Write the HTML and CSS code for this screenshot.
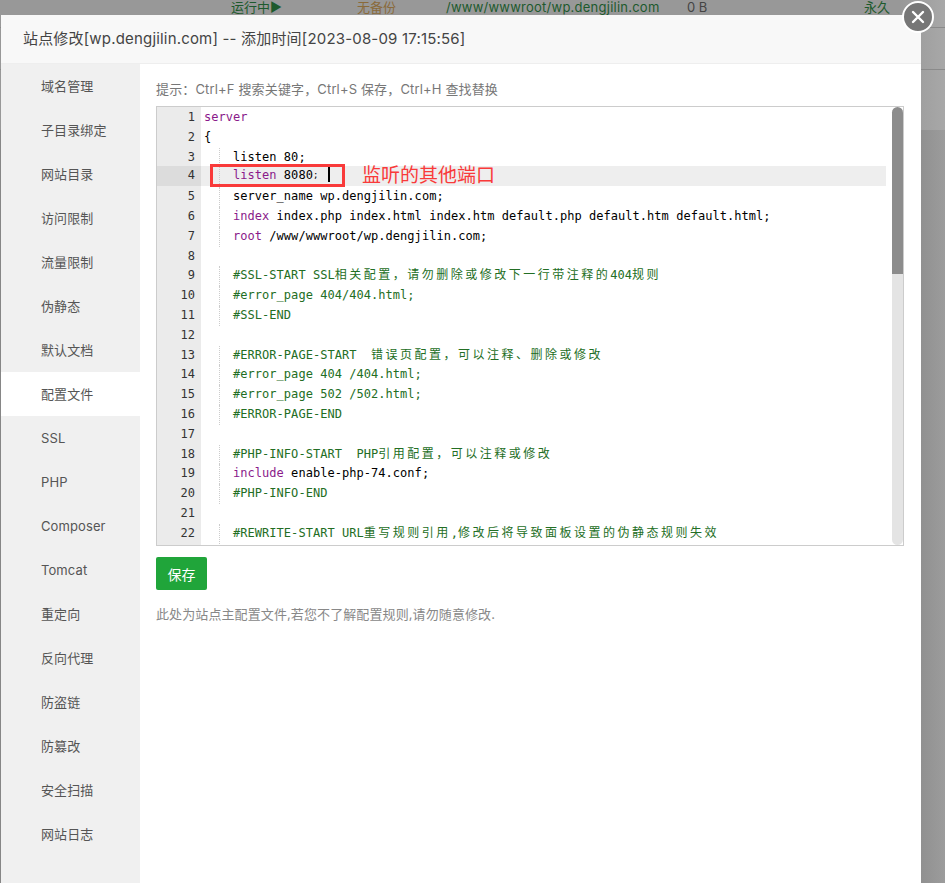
FILE: index.html
```html
<!DOCTYPE html>
<html lang="zh">
<head>
<meta charset="utf-8">
<title>站点修改</title>
<link rel="stylesheet" href="styles.css">
</head>
<body>
<div class="backdrop">
  <div class="bg-row">
    <span class="bg-status">运行中▶</span>
    <span class="bg-backup">无备份</span>
    <span class="bg-path">/www/wwwroot/wp.dengjilin.com</span>
    <span class="bg-size">0 B</span>
    <span class="bg-expire">永久</span>
  </div>
  <div class="modal">
    <header class="modal-head">站点修改[wp.dengjilin.com] -- 添加时间[2023-08-09 17:15:56]</header>
    <div class="modal-body">
      <nav class="side">
        <div class="side-item">域名管理</div>
        <div class="side-item">子目录绑定</div>
        <div class="side-item">网站目录</div>
        <div class="side-item">访问限制</div>
        <div class="side-item">流量限制</div>
        <div class="side-item">伪静态</div>
        <div class="side-item">默认文档</div>
        <div class="side-item active">配置文件</div>
        <div class="side-item">SSL</div>
        <div class="side-item">PHP</div>
        <div class="side-item">Composer</div>
        <div class="side-item">Tomcat</div>
        <div class="side-item">重定向</div>
        <div class="side-item">反向代理</div>
        <div class="side-item">防盗链</div>
        <div class="side-item">防篡改</div>
        <div class="side-item">安全扫描</div>
        <div class="side-item">网站日志</div>
      </nav>
      <main class="content">
        <p class="hint">提示：Ctrl+F 搜索关键字，Ctrl+S 保存，Ctrl+H 查找替换</p>
        <div class="editor">
          <div class="gutter">
            <div>1</div><div>2</div><div>3</div><div class="cur">4</div><div>5</div><div>6</div><div>7</div><div>8</div><div>9</div><div>10</div><div>11</div><div>12</div><div>13</div><div>14</div><div>15</div><div>16</div><div>17</div><div>18</div><div>19</div><div>20</div><div>21</div><div>22</div>
          </div>
          <div class="code">
            <div class="ln"><span class="kw">server</span></div>
            <div class="ln">{</div>
            <div class="ln in">listen 80;</div>
            <div class="ln in cur"><span class="kw">listen</span> 8080<span class="semi">;</span><span class="caret"></span></div>
            <div class="ln in">server_name wp.dengjilin.com;</div>
            <div class="ln in"><span class="kw">index</span> index.php index.html index.htm default.php default.htm default.html;</div>
            <div class="ln in"><span class="kw">root</span> /www/wwwroot/wp.dengjilin.com;</div>
            <div class="ln"></div>
            <div class="ln in cm">#SSL-START SSL<span class="cjk">相关配置，请勿删除或修改下一行带注释的</span>404<span class="cjk">规则</span></div>
            <div class="ln in cm">#error_page 404/404.html;</div>
            <div class="ln in cm">#SSL-END</div>
            <div class="ln"></div>
            <div class="ln in cm">#ERROR-PAGE-START  <span class="cjk">错误页配置，可以注释、删除或修改</span></div>
            <div class="ln in cm">#error_page 404 /404.html;</div>
            <div class="ln in cm">#error_page 502 /502.html;</div>
            <div class="ln in cm">#ERROR-PAGE-END</div>
            <div class="ln"></div>
            <div class="ln in cm">#PHP-INFO-START  PHP<span class="cjk">引用配置，可以注释或修改</span></div>
            <div class="ln in"><span class="kw">include</span> enable-php-74.conf;</div>
            <div class="ln in cm">#PHP-INFO-END</div>
            <div class="ln"></div>
            <div class="ln in cm">#REWRITE-START URL<span class="cjk">重写规则引用</span>,<span class="cjk">修改后将导致面板设置的伪静态规则失效</span></div>
          </div>
          <div class="thumb"></div>
          <div class="mark"></div>
          <div class="mark-label">监听的其他端口</div>
        </div>
        <button class="save">保存</button>
        <p class="note">此处为站点主配置文件,若您不了解配置规则,请勿随意修改.</p>
      </main>
    </div>
  </div>
  <div class="close" aria-label="关闭">
    <svg width="14" height="14" viewBox="0 0 14 14"><path d="M2 2 L12 12 M12 2 L2 12" stroke="#fff" stroke-width="2.4" stroke-linecap="round" fill="none"/></svg>
  </div>
</div>
</body>
</html>
```
FILE: styles.css
```css
* { box-sizing: border-box; }
html, body { margin: 0; padding: 0; height: 100%; overflow: hidden; }
body { font-family: "Inter", "Noto Sans", "Noto Sans CJK SC", sans-serif; font-size: 13px; color: #555; }
.backdrop { position: relative; width: 945px; height: 883px; background: linear-gradient(to right, #868686 900px, #9c9c9c 945px); overflow: hidden; padding: 15px 24px 0 1px; }
.backdrop::before { content: ""; position: absolute; left: 0; right: 0; top: 0; height: 130px; background: linear-gradient(to bottom, transparent 27px, #8a8a8a 27px, #8a8a8a 28px, transparent 28px, transparent 69px, #8a8a8a 69px, #8a8a8a 70px, transparent 70px), linear-gradient(to right, #989898 900px, #a8a8a8 945px); }
.bg-row { position: absolute; left: 0; top: 0; width: 100%; height: 15px; font-size: 13px; line-height: 15px; color: #1d5a2d; }
.bg-row span { position: absolute; top: 0; white-space: nowrap; }
.bg-status { left: 231px; }
.bg-backup { left: 357px; color: #8a6a3a; }
.bg-path { left: 446px; color: #1d5a2d; letter-spacing: 0.24px; }
.bg-size { left: 687px; color: #444; }
.bg-expire { left: 864px; }
.modal { position: relative; background: #fff; height: 868px; display: flex; flex-direction: column; }
.modal-head { height: 49px; background: #f8f8f8; border-bottom: 1px solid #eee; padding-left: 22px; font-size: 15px; line-height: 48px; color: #444; flex: none; letter-spacing: 0.18px; }
.modal-body { display: flex; flex: 1; min-height: 0; }
.side { width: 139px; background: #f0f0f0; flex: none; }
.side-item { height: 44px; line-height: 44px; padding-left: 40px; font-size: 13px; color: #555; letter-spacing: 0.1px; }
.side-item.active { background: #fff; }
.content { flex: 1; padding: 16px 17px 0 16px; min-width: 0; }
.hint { margin: 0; font-size: 13px; line-height: 18px; color: #777; letter-spacing: 0.15px; }
.editor { position: relative; margin-top: 8px; height: 440px; border: 1px solid #ccc; display: flex; overflow: hidden; font-family: "DejaVu Sans Mono", "Noto Sans CJK SC", monospace; font-size: 12px; line-height: 19.8px; }
.gutter { width: 44px; flex: none; background: #ebebeb; text-align: right; padding-right: 6px; padding-top: 1px; color: #333; }
.gutter .cur { background: #dcdcdc; margin: -1px -6px 1px 0; padding-right: 6px; }
.code { flex: 1; min-width: 0; padding: 1px 17px 0 3px; color: #000; letter-spacing: 0.04px; }
.ln { height: 19.8px; white-space: pre; position: relative; }
.ln.in { padding-left: 29px; }
.ln.in::before { content: ""; position: absolute; left: 15px; top: 0; bottom: 0; border-left: 1px dotted #ccc; }
.ln.cur { background: #eee; margin: -1px 0 1px -3px; padding-left: 32px; }
.ln.cur::before { left: 18px; }
.kw { color: #8a1a8a; }
.cm { color: #236e24; }
.cjk { letter-spacing: 2.5px; font-size: 12px; }
.semi { font-size: 9px; vertical-align: 1px; }
.caret { display: inline-block; width: 2px; height: 15px; background: #000; vertical-align: -3px; margin-left: 10px; }
.thumb { position: absolute; right: 0; top: 0; bottom: 0; width: 11px; background: linear-gradient(to bottom, #8c8c8c 0, #8c8c8c 167px, #e4e4e4 167px); border-radius: 6px; }
.mark { position: absolute; left: 53px; top: 57px; width: 135px; height: 23px; border: 3px solid #f93a3a; }
.mark-label { position: absolute; left: 205px; top: 55px; font-family: "Noto Sans CJK SC", sans-serif; font-size: 19px; line-height: 24px; color: #f93a3a; }
.save { display: block; margin-top: 11px; width: 51px; height: 33px; border: 0; border-radius: 2px; background: #20a53a; color: #fff; font: 14px "Noto Sans CJK SC", sans-serif; padding: 0; }
.note { margin: 15px 0 0; font-size: 13px; line-height: 18px; color: #888; letter-spacing: 0.1px; }
.close { position: absolute; left: 902px; top: 1px; width: 32px; height: 32px; border-radius: 50%; background: #777; border: 2px solid #fff; display: flex; align-items: center; justify-content: center; }
```
